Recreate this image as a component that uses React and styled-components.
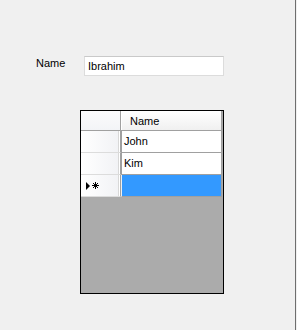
import React from "react";
import styled, { createGlobalStyle } from "styled-components";

const Global = createGlobalStyle`
  html, body { margin: 0; padding: 0; background: #f0f0f0; }
  body { font-family: "Liberation Sans", Arial, sans-serif; font-size: 11px; color: #000; }
`;

const Window = styled.div`
  width: 296px;
  height: 330px;
  box-sizing: border-box;
  border-right: 1px solid #6e6e6e;
  background: #f0f0f0;
  padding: 56px 0 0 0;
  display: flex;
  flex-direction: column;
`;

const FieldRow = styled.div`
  display: flex;
  align-items: flex-start;
  padding-left: 36px;
`;

const Label = styled.label`
  width: 48px;
  padding-top: 1px;
  font-size: 11px;
  line-height: 13px;
`;

const TextBox = styled.div`
  width: 140px;
  height: 20px;
  box-sizing: border-box;
  background: #fff;
  border: 1px solid #dcdcdc;
  border-top-color: #c9c9c9;
  padding: 3px 3px 0;
  font-size: 11px;
  line-height: 13px;
`;

const Grid = styled.div`
  margin: 34px 0 0 80px;
  width: 144px;
  height: 184px;
  box-sizing: border-box;
  border: 1px solid #000;
  background: #ababab;
  display: grid;
  grid-template-columns: 40px 101px;
  grid-auto-rows: min-content;
  align-content: start;
`;

const Corner = styled.div`
  height: 20px;
  box-sizing: border-box;
  background: linear-gradient(#fbfbfc, #f3f4f7);
  border-right: 1px solid #a0a0a0;
  border-bottom: 1px solid #a0a0a0;
`;

const ColHeader = styled.div`
  height: 20px;
  box-sizing: border-box;
  background: linear-gradient(#ffffff, #f0f0f0);
  border-bottom: 1px solid #a0a0a0;
  border-right: 1px solid #a0a0a0;
  padding: 4px 0 0 9px;
  line-height: 13px;
  box-shadow: inset 1px 1px 0 #fff;
`;

const RowHeader = styled.div`
  height: 22px;
  box-sizing: border-box;
  background: linear-gradient(90deg, #ffffff, #f1f2f5);
  border-right: 1px solid #a0a0a0;
  border-bottom: 1px solid #dcdcdc;
  box-shadow: inset -1px 0 0 #fff, inset -2px 0 0 #d8d8d8;
  display: flex;
  align-items: center;
  gap: 2px;
  padding-left: 5px;
`;

const Cell = styled.div`
  height: 22px;
  box-sizing: border-box;
  background: ${(p) => (p.$selected ? "#3399ff" : "#fff")};
  border: 1px solid #a0a0a0;
  border-top: none;
  border-left-color: ${(p) => (p.$selected ? "#f0f0f0" : "#a0a0a0")};
  padding: 4px 0 0 2px;
  line-height: 13px;
`;

const Triangle = styled.span`
  display: inline-block;
  width: 0;
  height: 0;
  border-top: 4px solid transparent;
  border-bottom: 4px solid transparent;
  border-left: 4px solid #000;
`;

const Star = () => (
  <svg width="7" height="7" viewBox="0 0 7 7" shapeRendering="crispEdges">
    <path d="M0 3h7M3 0v7" stroke="#000" strokeWidth="1" />
    <path d="M1 1h1v1H1zM5 1h1v1H5zM1 5h1v1H1zM5 5h1v1H5zM2 2h3v3H2z" fill="#000" />
  </svg>
);

const rows = ["John", "Kim"];

export default function App() {
  return (
    <>
      <Global />
      <Window>
        <FieldRow>
          <Label>Name</Label>
          <TextBox>Ibrahim</TextBox>
        </FieldRow>
        <Grid>
          <Corner />
          <ColHeader>Name</ColHeader>
          {rows.map((r) => (
            <React.Fragment key={r}>
              <RowHeader />
              <Cell>{r}</Cell>
            </React.Fragment>
          ))}
          <RowHeader>
            <Triangle />
            <Star />
          </RowHeader>
          <Cell $selected />
        </Grid>
      </Window>
    </>
  );
}
